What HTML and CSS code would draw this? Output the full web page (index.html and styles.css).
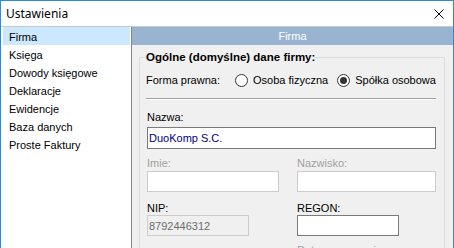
FILE: index.html
```html
<!DOCTYPE html>
<html lang="pl">
<head>
    <meta charset="UTF-8">
    <title>Ustawienia</title>
    <link rel="stylesheet" href="styles.css">
</head>
<body>
    <div class="window">
        <div class="titlebar">
            <span class="title">Ustawienia</span>
            <svg class="close" width="10" height="10" viewBox="0 0 10 10">
                <path d="M0.5 0.5 L9.5 9.5 M9.5 0.5 L0.5 9.5" stroke="#000" stroke-width="1" fill="none"/>
            </svg>
        </div>

        <div class="main">
            <ul class="sidebar">
                <li class="selected">Firma</li>
                <li>Księga</li>
                <li>Dowody księgowe</li>
                <li>Deklaracje</li>
                <li>Ewidencje</li>
                <li>Baza danych</li>
                <li>Proste Faktury</li>
            </ul>

            <div class="panel">
                <div class="panel-header">Firma</div>
                <div class="panel-body">
                    <fieldset class="group">
                        <legend>Ogólne (domyślne) dane firmy:</legend>

                        <div class="radio-row">
                            <span class="row-label">Forma prawna:</span>
                            <label class="radio"><span class="dot"></span>Osoba fizyczna</label>
                            <label class="radio checked"><span class="dot"></span>Spółka osobowa</label>
                        </div>

                        <div class="separator"></div>

                        <label class="field-label nazwa-label" for="nazwa">Nazwa:</label>
                        <input id="nazwa" class="field nazwa" type="text" value="DuoKomp S.C.">

                        <div class="grid imie-row">
                            <div>
                                <label class="field-label disabled">Imie:</label>
                                <input class="field off imie" type="text" disabled>
                            </div>
                            <div>
                                <label class="field-label disabled">Nazwisko:</label>
                                <input class="field off nazwisko" type="text" disabled>
                            </div>
                        </div>

                        <div class="grid nip-row">
                            <div>
                                <label class="field-label">NIP:</label>
                                <input class="field off nip" type="text" value="8792446312" readonly>
                            </div>
                            <div>
                                <label class="field-label">REGON:</label>
                                <input class="field regon" type="text">
                                <label class="field-label disabled next-label">Data rozpoczęcia:</label>
                            </div>
                        </div>
                    </fieldset>
                </div>
            </div>
        </div>
    </div>
</body>
</html>
```

FILE: styles.css
```css
* {
    box-sizing: border-box;
}
body {
    margin: 0;
    width: 454px;
    height: 248px;
    overflow: hidden;
    font-family: "Liberation Sans", Arial, sans-serif;
    font-size: 11px;
    color: #000;
}
.window {
    width: 454px;
    height: 248px;
    border: 1px solid #2d8ae4;
    border-bottom: none;
    display: flex;
    flex-direction: column;
    background-color: #f0f0f0;
}
.titlebar {
    height: 25px;
    flex: none;
    background-color: #fff;
    display: flex;
    align-items: center;
    justify-content: space-between;
    padding: 0 9px 0 5px;
}
.title {
    font-family: "Noto Sans", sans-serif;
    font-size: 12px;
}
.close {
    display: block;
}
.main {
    flex: 1;
    display: flex;
    min-height: 0;
    border-top: 1px solid #c8c8c8;
}
.sidebar {
    width: 131px;
    flex: none;
    margin: 0;
    padding: 0 1px 0 2px;
    list-style: none;
    background-color: #fff;
    border-right: 1px solid #828790;
}
.sidebar li {
    height: 18px;
    padding: 3px 0 0 6px;
    line-height: 15px;
}
.sidebar li.selected {
    background-color: #cce8ff;
}
.panel {
    flex: 1;
    display: flex;
    flex-direction: column;
    min-width: 0;
}
.panel-header {
    height: 18px;
    line-height: 18px;
    background-color: #99b4d1;
    color: #fff;
    text-align: center;
}
.panel-body {
    padding: 5px 8px 0 7px;
}
.group {
    margin: 0;
    min-width: 0;
    border: 1px solid #dcdcdc;
    padding: 5px 8px 0 6px;
}
.group legend {
    padding: 0;
    font-size: 11.5px;
    font-weight: bold;
    line-height: 14px;
}
.radio-row {
    height: 22px;
    display: flex;
    align-items: center;
    line-height: 13px;
    white-space: nowrap;
}
.row-label {
    margin-right: 15px;
}
.radio {
    display: flex;
    align-items: center;
    flex: none;
}
.radio + .radio {
    margin-left: 9px;
}
.dot {
    width: 13px;
    height: 13px;
    flex: none;
    margin-right: 5px;
    border: 1px solid #333;
    border-radius: 50%;
    background-color: #fff;
    display: flex;
    align-items: center;
    justify-content: center;
}
.radio.checked .dot::after {
    content: "";
    width: 7px;
    height: 7px;
    border-radius: 50%;
    background-color: #333;
}
.separator {
    margin-top: 7px;
    border-top: 1px solid #a0a0a0;
    border-bottom: 1px solid #fff;
}
.field-label {
    display: block;
    height: 13px;
    line-height: 13px;
    margin-left: 1px;
}
.field-label.disabled {
    color: #a0a0a0;
}
.nazwa-label {
    margin-top: 11px;
}
.field {
    display: block;
    margin: 3px 0 0 1px;
    height: 21px;
    padding: 0 1px;
    border: 1px solid #7a7a7a;
    background-color: #fff;
    font-family: "Liberation Sans", Arial, sans-serif;
    font-size: 11px;
    color: #000;
    outline: none;
}
.field.off {
    border-color: #cccccc;
    color: #6d6d6d;
}
.field.nip {
    background-color: #f0f0f0;
}
.nazwa {
    width: 289px;
    height: 22px;
    color: #000080;
}
.grid {
    display: grid;
    grid-template-columns: 150px 1fr;
}
.imie-row {
    margin-top: 8px;
}
.imie-row .field {
    margin-top: 1px;
}
.nip-row {
    margin-top: 10px;
}
.nip-row .field {
    margin-top: 0;
}
.imie {
    width: 132px;
}
.nazwisko {
    width: 139px;
}
.nip, .regon {
    width: 102px;
}
.next-label {
    margin-top: 8px;
}
```
